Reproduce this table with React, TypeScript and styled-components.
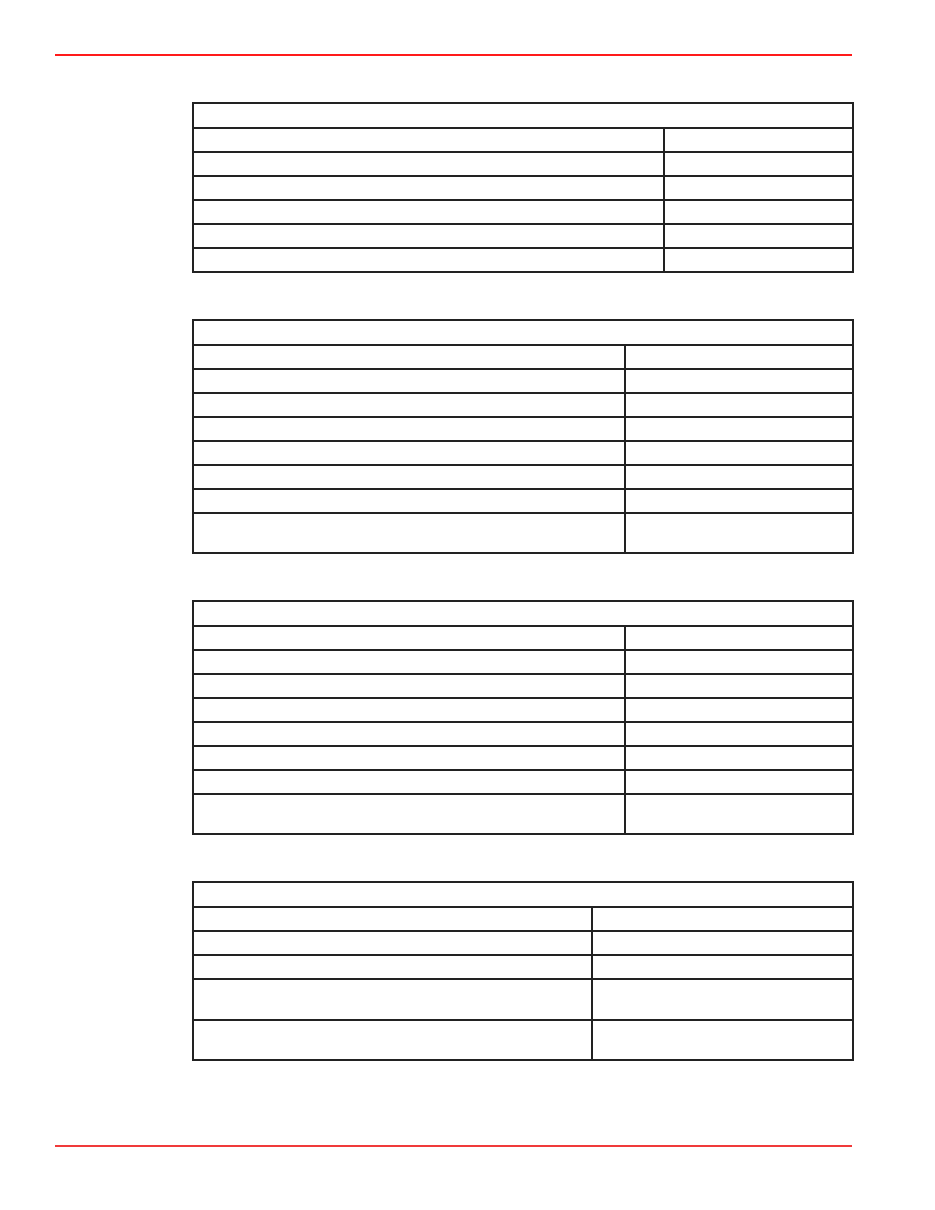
import * as React from 'react';
import styled, { createGlobalStyle } from 'styled-components';

const GlobalStyle = createGlobalStyle`
html, body {
margin: 0;
padding: 0;
background: #ffffff;
font-family: "Liberation Sans", Arial, sans-serif;
}
`

interface TableSpec {
    split: number;
    rows: number[];
}

const tables: TableSpec[] = [
    { split: 469, rows: [22, 22, 22, 22, 22, 22] },
    { split: 430, rows: [22, 22, 22, 22, 22, 22, 22, 38] },
    { split: 430, rows: [22, 22, 22, 22, 22, 22, 22, 38] },
    { split: 397, rows: [22, 22, 22, 39, 38] },
];

export default function App() {
    return <Page>
        <GlobalStyle />
        <RedRule />
        <Tables>
            {tables.map((t, i) => (
                <Table key={i}>
                    <TitleRow />
                    {t.rows.map((h, j) => (
                        <Row key={j} $split={t.split}>
                            <Cell $h={h} />
                            <Cell $h={h} $divided />
                        </Row>
                    ))}
                </Table>
            ))}
        </Tables>
        <RedRule $thick />
    </Page>
}

const Page = styled.div`
width: 935px;
height: 1210px;
padding: 54px 0 0 55px;
box-sizing: border-box;
display: flex;
flex-direction: column;
`

const RedRule = styled.div<{ $thick?: boolean }>`
width: 797px;
height: 2px;
background: ${p => p.$thick ? '#f03a3a' : '#ff1a1a'};
`

const Tables = styled.div`
margin: 46px 0 84px 137px;
display: flex;
flex-direction: column;
gap: 46px;
`

const Table = styled.div`
width: 662px;
box-sizing: border-box;
border: 2px solid #222;
`

const TitleRow = styled.div`
height: 23px;
`

const Row = styled.div<{ $split: number }>`
display: grid;
grid-template-columns: ${p => p.$split}px 1fr;
border-top: 2px solid #222;
`

const Cell = styled.div<{ $h: number; $divided?: boolean }>`
height: ${p => p.$h}px;
border-left: ${p => p.$divided ? '2px solid #222' : 'none'};
`
